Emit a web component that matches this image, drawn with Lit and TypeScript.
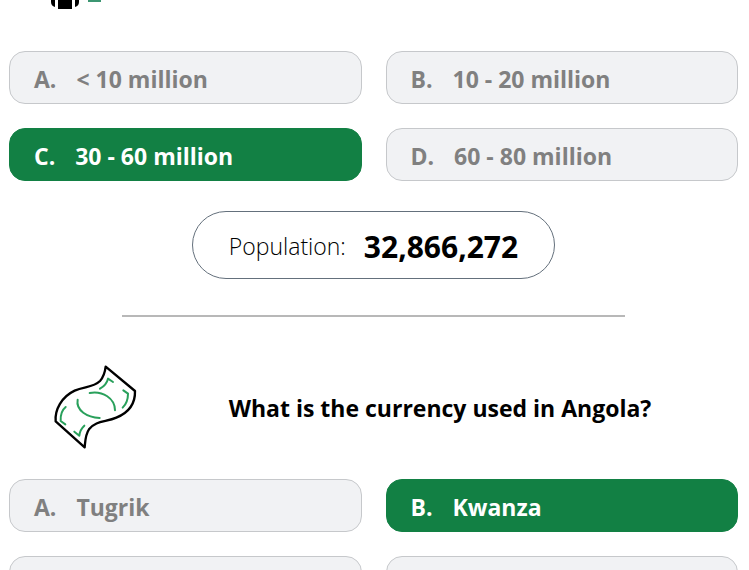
import { LitElement, html, css, svg } from "lit";
import { customElement, property } from "lit/decorators.js";

interface Option {
  letter: string;
  text: string;
  correct?: boolean;
}

const POPULATION: Option[] = [
  { letter: "A.", text: "< 10 million" },
  { letter: "B.", text: "10 - 20 million" },
  { letter: "C.", text: "30 - 60 million", correct: true },
  { letter: "D.", text: "60 - 80 million" },
];

const CURRENCY: Option[] = [
  { letter: "A.", text: "Tugrik" },
  { letter: "B.", text: "Kwanza", correct: true },
  { letter: "C.", text: "" },
  { letter: "D.", text: "" },
];

@customElement("answer-grid")
export class AnswerGrid extends LitElement {
  @property({ attribute: false }) options: Option[] = [];

  static styles = css`
    :host {
      display: grid;
      grid-template-columns: 1fr 1fr;
      gap: 24px;
    }
    .option {
      display: flex;
      align-items: center;
      gap: 20px;
      box-sizing: border-box;
      height: 53px;
      padding: 2px 24px 0;
      border: 1px solid #c6c8cb;
      border-radius: 16px;
      background: #f1f2f4;
      color: #808080;
      font: 700 23px/32px "Open Sans", "Noto Sans", sans-serif;
      text-align: left;
      white-space: nowrap;
    }
    .correct {
      border-color: #128044;
      background: #128044;
      color: #fff;
    }
  `;

  render() {
    return this.options.map(
      (o) => html`<button class="option ${o.correct ? "correct" : ""}" type="button">
        <span>${o.letter}</span><span>${o.text}</span>
      </button>`
    );
  }
}

const banknote = svg`
  <g fill="none" stroke-linecap="round" stroke-linejoin="round">
    <path stroke="#000" stroke-width="7" d="M197 35L285 108C286 142 268 172 229 188C198 202 168 196 147 223C136 238 136 257 134 277L47 199C44 165 64 126 104 107C133 94 160 98 180 78C191 66 195 51 197 35Z"/>
    <g stroke="#29a05b" stroke-width="6">
      <path d="M149 114C188 107 225 130 225 166"/>
      <path d="M113 134C107 167 142 187 179 189"/>
      <path d="M219 81L204 71C201 84 192 94 180 101"/>
      <path d="M250 106L264 116C264 132 259 147 248 158"/>
      <path d="M77 156C66 165 61 181 62 198L76 208"/>
      <path d="M133 212C123 221 119 231 118 242L103 230"/>
    </g>
  </g>`;

@customElement("app-root")
export class AppRoot extends LitElement {
  static styles = css`
    :host {
      display: block;
      height: 100vh;
      overflow: hidden;
      background: #fff;
      color: #000;
      font-family: "Open Sans", "Noto Sans", sans-serif;
    }
    .quiz {
      display: flex;
      flex-direction: column;
      padding: 0 11px 0 9px;
    }
    .people {
      display: block;
      width: 60px;
      height: 9px;
      margin: 0 0 42px 39px;
    }
    .fact {
      display: flex;
      align-items: center;
      align-self: center;
      gap: 18px;
      box-sizing: border-box;
      height: 68px;
      margin: 30px 0 36px;
      padding: 2px 36px 0;
      border: 1px solid #64707c;
      border-radius: 34px;
      font-size: 23px;
      font-weight: 300;
      white-space: nowrap;
    }
    .figure {
      font-size: 30px;
      font-weight: 700;
    }
    .rule {
      width: 69%;
      height: 2px;
      margin: 0 auto;
      border: 0;
      background: #b8b8b8;
    }
    .question {
      display: flex;
      align-items: center;
      margin: 38px 0 19px;
    }
    .note {
      flex: none;
      width: 94px;
      height: 105px;
      margin-left: 39px;
    }
    .title {
      flex: 1;
      margin: 0;
      font-size: 23px;
      line-height: 32px;
      font-weight: 700;
      text-align: center;
    }
  `;

  render() {
    return html`<main class="quiz">
      <svg class="people" viewBox="0 0 60 9" aria-hidden="true">
        <path d="M3 0H7V7Q3 6 3 2ZM10 0H24V9H10ZM27 0H31V2Q31 6 27 7Z" />
        <path fill="#3c9672" d="M40 0H53V2H40Z" />
      </svg>
      <answer-grid .options=${POPULATION}></answer-grid>
      <p class="fact"><span>Population:</span><strong class="figure">32,866,272</strong></p>
      <hr class="rule" />
      <div class="question">
        <svg class="note" viewBox="24 0 282 315" aria-hidden="true">${banknote}</svg>
        <h2 class="title">What is the currency used in Angola?</h2>
      </div>
      <answer-grid .options=${CURRENCY}></answer-grid>
    </main>`;
  }
}
